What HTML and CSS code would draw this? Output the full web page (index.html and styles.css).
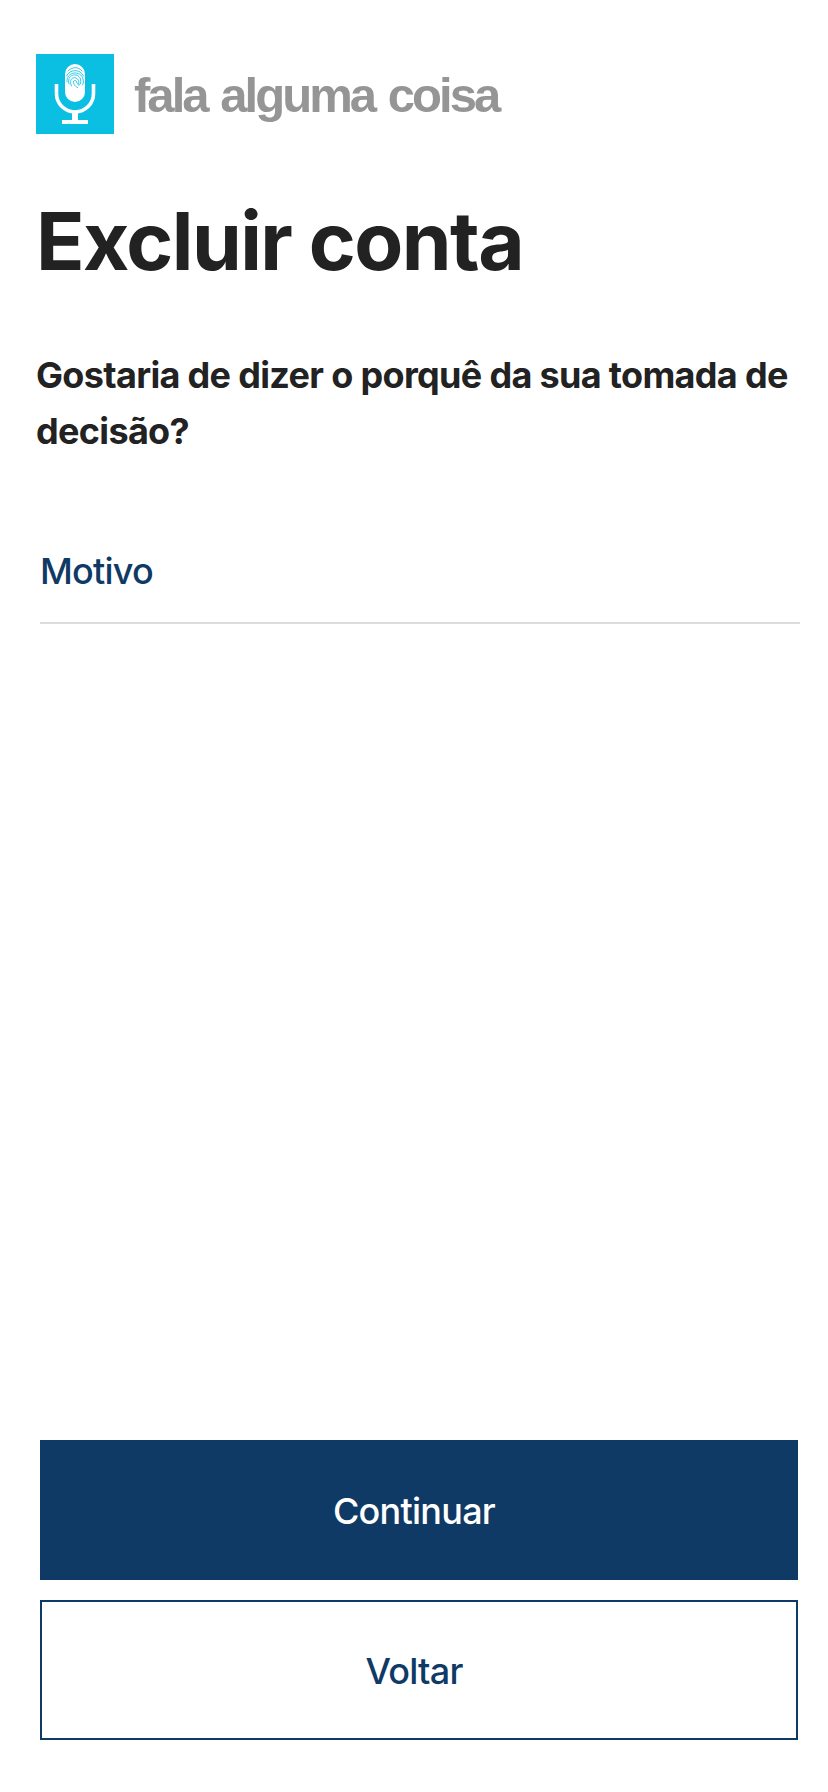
FILE: index.html
```html
<!DOCTYPE html>
<html lang="pt-BR">
<head>
<meta charset="utf-8">
<title>Excluir conta</title>
<link rel="stylesheet" href="styles.css">
</head>
<body>
<main class="screen">
  <header class="brand">
    <svg class="brand-icon" viewBox="0 0 78 80" aria-hidden="true">
      <rect width="78" height="80" fill="#0bbfe2"/>
      <rect x="29" y="10" width="20" height="38" rx="10" fill="#fff"/>
      <path d="M20.500 30v9.500a18.500 18.500 0 0 0 37 0V30" fill="none" stroke="#fff" stroke-width="3.600"/>
      <path d="M36 57h6v9h10v4H26v-4h10z" fill="#fff"/>
      <g fill="none" stroke="#0bbfe2" stroke-width=".85" stroke-linecap="round">
        <path d="M32 17c4-4.500 10.500-4.500 14 0"/>
        <path d="M30.500 22c3-7 14-7.500 17 0"/>
        <path d="M31 28c-1-11 14-12 16-3 .7 3 .3 5-.5 6"/>
        <path d="M33 30c-3-10 9-12 11.500-5 1 4-.5 7-2.500 6"/>
        <path d="M35.500 32c-4-9 5-10.500 7-5.500 .7 2 .5 3.500-.3 3.500-2 0-1-3.500-3.200-3.500-3 0-1.500 5.500 2.500 7"/>
      </g>
    </svg>
    <span class="brand-name">fala alguma coisa</span>
  </header>
  <h1 class="title">Excluir conta</h1>
  <p class="question">Gostaria de dizer o porquê da sua tomada de decisão?</p>
  <label class="field">Motivo</label>
  <div class="actions">
    <button class="button button-primary">Continuar</button>
    <button class="button button-secondary">Voltar</button>
  </div>
</main>
</body>
</html>
```
FILE: styles.css
```css
* {
  box-sizing: border-box;
}

body {
  margin: 0;
  background: #fff;
  color: #222;
  font-family: Inter, "Liberation Sans", sans-serif;
}

.screen {
  display: flex;
  flex-direction: column;
  height: 1792px;
  padding: 54px 28px 52px 36px;
}

.brand {
  display: flex;
  gap: 20px;
  height: 80px;
}

.brand-icon {
  width: 78px;
  height: 80px;
}

.brand-name {
  color: #959595;
  font: bold 49px/82px "Liberation Sans", Arial, sans-serif;
  letter-spacing: -2.95px;
  word-spacing: 3px;
  white-space: nowrap;
}

.title {
  margin: 59px 0 0;
  font-size: 80px;
  font-weight: 700;
  line-height: 96px;
  letter-spacing: -1.55px;
  white-space: nowrap;
}

.question {
  margin: 58px 0 0;
  font-size: 36px;
  font-weight: 700;
  line-height: 56px;
  letter-spacing: -0.67px;
}

.field {
  height: 81px;
  margin: 84px 0 0 4px;
  border-bottom: 2px solid #dcdcdc;
  color: #0f3a65;
  font-size: 36px;
  font-weight: 500;
  line-height: 56px;
  letter-spacing: -0.8px;
}

.actions {
  display: flex;
  flex-direction: column;
  gap: 20px;
  margin: auto 2px 0 4px;
}

.button {
  height: 140px;
  padding: 2px 10px 0 0;
  border: 2px solid #0f3a65;
  background: #fff;
  color: #0f3a65;
  font: 500 36px/56px Inter, "Liberation Sans", sans-serif;
  letter-spacing: -0.75px;
}

.button-primary {
  background: #0f3a65;
  color: #fff;
}
```
